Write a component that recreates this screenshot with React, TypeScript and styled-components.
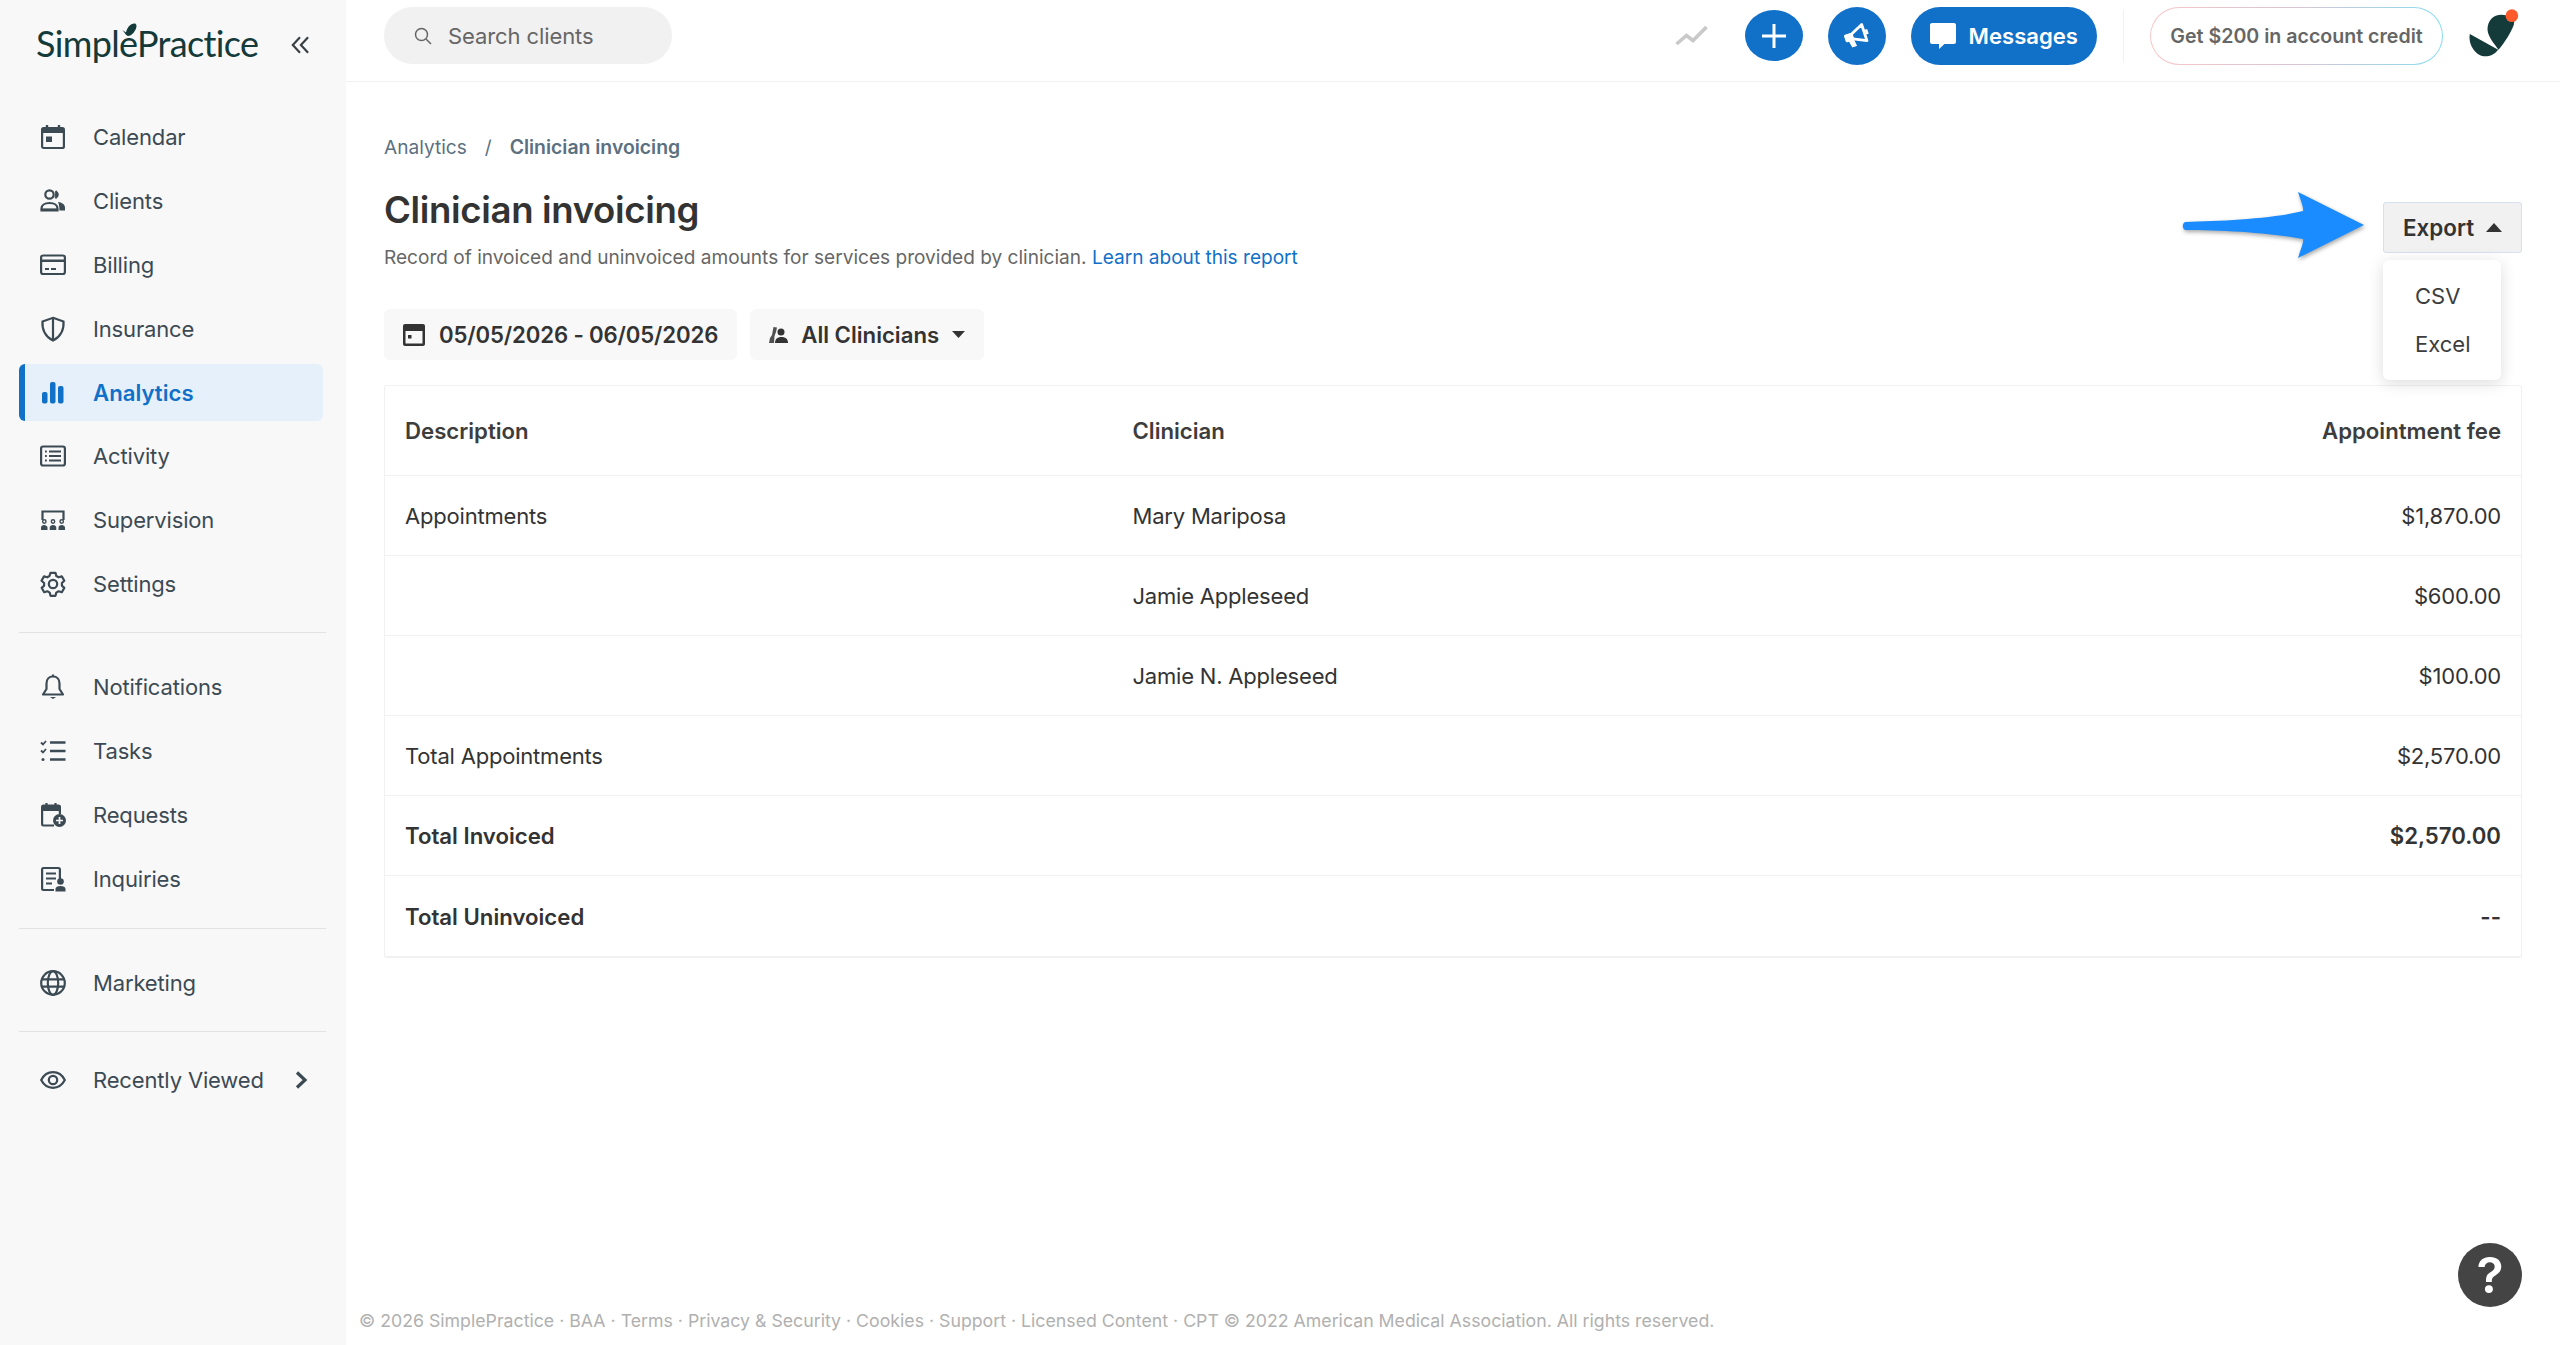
import styled, { createGlobalStyle } from "styled-components";
import type { ReactNode } from "react";

const GlobalStyle = createGlobalStyle`
  html, body {
    margin: 0;
    padding: 0;
    height: 100%;
    background: #fff;
  }
  body {
    font-family: Inter, "Liberation Sans", sans-serif;
    color: #333;
    -webkit-font-smoothing: antialiased;
  }
  #root {
    height: 100%;
  }
  * {
    box-sizing: border-box;
  }
`;

const Page = styled.div`
  display: flex;
  height: 1345px;
  overflow: hidden;
`;

// --- Sidebar ---

const Sidebar = styled.aside`
  flex: 0 0 346px;
  background: #f8f8f8;
  padding: 0 20px 0 19px;
`;

const LogoRow = styled.div`
  display: flex;
  align-items: center;
  justify-content: space-between;
  height: 86px;
  margin-bottom: 19px;
  padding: 0 17px 0 17px;
`;

const Logo = styled.div`
  position: relative;
  font-family: Lato, "Open Sans", sans-serif;
  font-size: 36px;
  font-weight: 400;
  letter-spacing: -0.65px;
  color: #143a3a;
  line-height: 46px;

  svg {
    position: absolute;
    left: 86px;
    top: 3px;
  }
`;

const CollapseButton = styled.span`
  display: flex;
  margin-top: 4px;
  color: #3a3f44;
`;

const NavGroup = styled.nav<{ $pad?: number }>`
  padding: 0 0 ${(p) => p.$pad ?? 16}px;
`;

const NavItem = styled.a<{ $active?: boolean }>`
  display: flex;
  align-items: center;
  height: ${(p) => (p.$active ? "56.9px" : "63.9px")};
  margin: ${(p) => (p.$active ? "3.5px 3px 3.5px 0" : "0")};
  padding-left: ${(p) => (p.$active ? "15px" : "21px")};
  border-left: ${(p) => (p.$active ? "6px solid #1170c8" : "0")};
  border-radius: 6px;
  background: ${(p) => (p.$active ? "#e6f0fa" : "transparent")};
  color: ${(p) => (p.$active ? "#1170c8" : "#3c4a54")};
  font-size: ${(p) => (p.$active ? "22.2px" : "22px")};
  letter-spacing: ${(p) => (p.$active ? "0" : "-0.15px")};
  font-weight: ${(p) => (p.$active ? 600 : 400)};

  svg.nav-icon {
    flex: 0 0 26px;
    margin-right: 27px;
  }
`;

const ChevronWrap = styled.span`
  display: flex;
  margin-left: 30px;
  color: #3c4a54;
`;

const Divider = styled.hr<{ $gap?: number }>`
  border: 0;
  border-top: 1.5px solid #e2e2e2;
  margin: 0 0 ${(p) => p.$gap ?? 22}px;
`;

// --- Top bar ---

const Main = styled.div`
  flex: 1;
  min-width: 0;
  display: flex;
  flex-direction: column;
  position: relative;
`;

const TopBar = styled.header`
  flex: 0 0 82px;
  display: flex;
  align-items: center;
  padding: 0 40px 10px 38px;
  border-bottom: 1.5px solid #f1f1f1;
`;

const SearchBox = styled.div`
  display: flex;
  align-items: center;
  gap: 16px;
  width: 288px;
  height: 57px;
  padding-left: 30px;
  border-radius: 29px;
  background: #f1f1f1;
  color: #666;
  font-size: 22px;
  letter-spacing: -0.1px;
`;

const TopActions = styled.div`
  margin-left: auto;
  display: flex;
  align-items: center;
`;

const RoundButton = styled.span<{ $flat?: boolean }>`
  display: flex;
  align-items: center;
  justify-content: center;
  width: 58px;
  height: ${(p) => (p.$flat ? "51px" : "58px")};
  margin-right: 25px;
  border-radius: 50%;
  background: #1170c8;
  color: #fff;
`;

const MessagesButton = styled.span`
  display: flex;
  align-items: center;
  gap: 13px;
  height: 58px;
  padding: 0 18.5px 0 19px;
  border-radius: 29px;
  background: #1170c8;
  color: #fff;
  font-size: 22.1px;
  font-weight: 600;
`;

const TopDivider = styled.span`
  width: 1.5px;
  height: 52px;
  margin: 0 26px;
  background: #f1f1f1;
`;

const CreditPill = styled.span`
  display: flex;
  align-items: center;
  justify-content: center;
  width: 293px;
  height: 58px;
  border: 1.5px solid transparent;
  border-radius: 29px;
  background:
    linear-gradient(#fff, #fff) padding-box,
    linear-gradient(90deg, #f9c6c6, #d9c6d4, #86dcf2) border-box;
  color: #666;
  font-size: 19.6px;
  font-weight: 600;
`;

const Avatar = styled.span`
  display: flex;
  margin: -5px 0 0 25px;
`;

const TrendWrap = styled.span`
  display: flex;
  margin-right: 37px;
`;

// --- Content ---

const Content = styled.main`
  flex: 1;
  padding: 54px 38px 0;
`;

const Breadcrumb = styled.div`
  display: flex;
  align-items: center;
  height: 22px;
  font-size: 19.1px;
  color: #5b7080;

  i {
    font-style: normal;
    margin: 0 18px;
  }

  b {
    font-size: 19.4px;
    font-weight: 600;
  }
`;

const HeadingRow = styled.div`
  position: relative;
  margin-top: 29px;
`;

const Title = styled.h1`
  margin: 0;
  font-size: 36.6px;
  font-weight: 600;
  line-height: 46px;
  letter-spacing: -0.35px;
  color: #333;
`;

const Description = styled.p`
  margin: 13px 0 0;
  font-size: 19.07px;
  line-height: 24px;
  color: #666;

  a {
    color: #1170c8;
  }
`;

const ExportArea = styled.div`
  position: absolute;
  right: 0;
  top: 15px;
  z-index: 2;
`;

const ExportButton = styled.span`
  display: flex;
  align-items: center;
  gap: 12px;
  width: 139px;
  height: 51px;
  padding-left: 20px;
  border-radius: 3px;
  outline: 1.5px solid rgba(130, 180, 230, 0.25);
  outline-offset: -1px;
  background: #f1f1f1;
  color: #333;
  font-size: 22.4px;
  font-weight: 600;
`;

const ExportMenu = styled.div`
  position: absolute;
  top: 58px;
  left: 0;
  width: 118px;
  height: 120px;
  padding: 12px 0 0 32px;
  border-radius: 6px;
  background: #fff;
  box-shadow: 0 3px 16px rgba(0, 0, 0, 0.14);
  font-size: 22px;
  color: #3d3d3d;

  div {
    height: 48px;
    line-height: 48px;
  }
`;

const ArrowMark = styled.svg`
  position: absolute;
  right: 156px;
  top: -13px;
  filter: drop-shadow(1px 2px 2px rgba(0, 0, 0, 0.35));
`;

const Filters = styled.div`
  display: flex;
  gap: 13px;
  margin-top: 39px;
`;

const FilterButton = styled.span<{ $wide?: boolean }>`
  display: flex;
  align-items: center;
  height: 51px;
  padding: 0 19px;
  gap: ${(p) => (p.$wide ? "14px" : "13px")};
  border-radius: 6px;
  background: #f8f8f8;
  color: #333;
  font-size: 22.2px;
  letter-spacing: ${(p) => (p.$wide ? "-0.15px" : "0")};
  font-weight: 600;
`;

const Table = styled.div`
  margin-top: 25px;
  border: 1.5px solid #f1f1f1;
  border-bottom-width: 2.5px;
  border-radius: 3px;
`;

const Row = styled.div<{ $head?: boolean; $bold?: boolean }>`
  display: grid;
  grid-template-columns: 727.5px 1fr auto;
  align-items: center;
  height: ${(p) => (p.$head ? "90px" : "80px")};
  padding: 0 20px;
  border-bottom: 1.5px solid #f1f1f1;
  font-size: ${(p) => (p.$head || p.$bold ? "22.2px" : "22px")};
  letter-spacing: ${(p) => (p.$head || p.$bold ? "0" : "-0.2px")};
  font-weight: ${(p) => (p.$head || p.$bold ? 600 : 400)};
  color: ${(p) => (p.$head ? "#3d3d3d" : "#333")};

  &:last-child {
    border-bottom: 0;
  }
`;

const Footer = styled.footer`
  padding: 0 0 0 13px;
  height: 36px;
  font-size: 17.73px;
  line-height: 24px;
  color: #b0b0b0;
`;

const HelpButton = styled.span`
  position: absolute;
  right: 38px;
  bottom: 38px;
  display: flex;
  align-items: center;
  justify-content: center;
  width: 64px;
  height: 64px;
  border-radius: 50%;
  background: #444;
  color: #fff;
  font-size: 50px;
  font-weight: 600;
`;

// --- Icons ---

const Icon = ({ children, size = 26 }: { children: ReactNode; size?: number }) => (
  <svg className="nav-icon" width={size} height={size} viewBox="0 0 26 26" fill="none" stroke="currentColor" strokeWidth="2.2">
    {children}
  </svg>
);

const CalendarIcon = () => (
  <Icon>
    <path d="M2 5.5c0-.8.7-1.5 1.5-1.5h19c.8 0 1.5.7 1.5 1.5V9H2z" fill="currentColor" stroke="none" />
    <rect x="2.1" y="4" width="21.8" height="20" rx="1.5" />
    <path d="M7 1v4M19 1v4" strokeWidth="2.4" />
    <rect x="6" y="12.5" width="6" height="5.5" fill="currentColor" stroke="none" />
  </Icon>
);

const ClientsIcon = () => (
  <Icon>
    <circle cx="9.5" cy="6.5" r="4.2" />
    <path d="M1.5 22.5v-2c0-3.2 3-5.5 8-5.500s8 2.300 8 5.500v2z" />
    <path d="M16 2.800a4.300 4.300 0 0 1 0 7.600c-1 0-.8-1.500-.5-3.600.2-2-.4-3.400.5-4z" fill="currentColor" stroke="currentColor" strokeWidth="1" />
    <path d="M18 14c4 .4 7 2.600 7 5.500v3h-5.600c0-3.400-.2-6-1.400-8.500z" fill="currentColor" stroke="none" />
    <path d="M1.500 21.500h16" />
  </Icon>
);

const CardIcon = () => (
  <Icon>
    <rect x="1.100" y="3.500" width="23.800" height="18.500" rx="2" />
    <path d="M1 7.500h24V10H1z" fill="currentColor" stroke="none" />
    <path d="M5 17h4M11 17h5" />
  </Icon>
);

const ShieldIcon = () => (
  <Icon>
    <path d="M13 1.800 23.500 5.500c.6 8-3 15.500-10.500 19C5.500 21 1.900 13.500 2.500 5.500z" />
    <path d="M13 2v22" />
  </Icon>
);

const BarsIcon = () => (
  <Icon>
    <g fill="currentColor" stroke="none">
      <rect x="2" y="12" width="5.500" height="11.500" rx="2" />
      <rect x="10" y="2" width="5.500" height="21.500" rx="2" />
      <rect x="18" y="6" width="5.500" height="17.500" rx="2" />
    </g>
  </Icon>
);

const ActivityIcon = () => (
  <Icon>
    <rect x="1.100" y="3.500" width="23.800" height="19" rx="2" />
    <path d="M9 8.500h12M9 13h12M9 17.500h12M5 8.500h1.800M5 13h1.800M5 17.500h1.800" />
  </Icon>
);

const SupervisionIcon = () => (
  <Icon>
    <path d="M2.500 13V4.500h21V13" />
    <g fill="currentColor" stroke="none">
      <path d="M1 23v-2.500c0-1.500 1.500-2.500 3-2.500s3.500 1 3.500 2.500V23zM9.700 23v-2.500c0-1.500 1.500-2.500 3.300-2.500s3.300 1 3.300 2.500V23zM18.500 23v-2.500c0-1.500 1.500-2.500 3.200-2.500S25 19 25 20.500V23z" />
    </g>
    <g strokeWidth="1.400">
      <circle cx="4.300" cy="14.500" r="1.700" />
      <circle cx="13" cy="14.500" r="1.700" />
      <circle cx="21.700" cy="14.500" r="1.700" />
    </g>
  </Icon>
);

const GearIcon = () => (
  <Icon>
    <circle cx="13" cy="13" r="4.200" />
    <path d="M10.500 1.800h5l.8 3.200 2.300 1.300 3.200-.9 2.500 4.300-2.400 2.300v2.600l2.400 2.300-2.500 4.300-3.200-.9-2.300 1.300-.8 3.200h-5l-.8-3.200-2.300-1.300-3.200.9-2.500-4.300 2.400-2.300v-2.600L1.500 9.700 4 5.400l3.200.9L9.500 5z" strokeLinejoin="round" />
  </Icon>
);

const BellIcon = () => (
  <Icon>
    <path d="M13 2.500c-4 0-6.500 3-6.500 7v5.500L3 20.500h20L19.500 15V9.500c0-4-2.500-7-6.500-7z" strokeLinejoin="round" />
    <path d="M13 .5v2" />
    <path d="M10 23h6l-3 2z" fill="currentColor" stroke="none" />
  </Icon>
);

const TasksIcon = () => (
  <Icon>
    <path d="M1 4.500l2 2 3-3.500M1 12.500l2 2 3-3.500" strokeWidth="1.800" />
    <path d="M10 4.500h15.500M10 13h15.500M10 21.500h15.500" strokeWidth="2.400" />
    <circle cx="3" cy="21.500" r="1.500" fill="currentColor" stroke="none" />
  </Icon>
);

const RequestsIcon = () => (
  <Icon>
    <path d="M14 23.500H3.500c-.8 0-1.400-.6-1.400-1.400V5c0-.8.6-1.400 1.400-1.400h15c.8 0 1.400.6 1.400 1.400v7" />
    <path d="M2 5c0-.8.7-1.500 1.500-1.500h15c.8 0 1.500.7 1.500 1.500v4H2z" fill="currentColor" stroke="none" />
    <path d="M6.500 1v4M15.500 1v4" />
    <circle cx="19.500" cy="18.500" r="6.500" fill="currentColor" stroke="none" />
    <path d="M19.500 15v7M16 18.500h7" stroke="#f8f8f8" strokeWidth="1.700" />
  </Icon>
);

const InquiriesIcon = () => (
  <Icon>
    <path d="M14 24H3.500c-.8 0-1.400-.6-1.400-1.400V3.400C2.100 2.600 2.700 2 3.500 2h15c.8 0 1.400.6 1.400 1.400V13" />
    <path d="M6 7.500h10M6 12.500h10M6 17.500h6" />
    <circle cx="20.500" cy="15.500" r="3.300" fill="currentColor" stroke="none" />
    <path d="M15.500 25.500v-2.700c0-1.700 2-2.800 5-2.800s5 1.100 5 2.800v2.700z" fill="currentColor" stroke="none" />
  </Icon>
);

const GlobeIcon = () => (
  <Icon>
    <circle cx="13" cy="13" r="11.800" />
    <ellipse cx="13" cy="13" rx="5.200" ry="11.800" />
    <path d="M1.500 9.300h23M1.500 16.700h23" />
  </Icon>
);

const EyeIcon = () => (
  <Icon>
    <path d="M1.200 13C3.800 8 8 5.200 13 5.200S22.200 8 24.800 13C22.200 18 18 20.800 13 20.800S3.800 18 1.200 13z" />
    <circle cx="13" cy="13" r="4.200" />
  </Icon>
);

const navTop = [
  { label: "Calendar", icon: <CalendarIcon /> },
  { label: "Clients", icon: <ClientsIcon /> },
  { label: "Billing", icon: <CardIcon /> },
  { label: "Insurance", icon: <ShieldIcon /> },
  { label: "Analytics", icon: <BarsIcon />, active: true },
  { label: "Activity", icon: <ActivityIcon /> },
  { label: "Supervision", icon: <SupervisionIcon /> },
  { label: "Settings", icon: <GearIcon /> },
];

const navMiddle = [
  { label: "Notifications", icon: <BellIcon /> },
  { label: "Tasks", icon: <TasksIcon /> },
  { label: "Requests", icon: <RequestsIcon /> },
  { label: "Inquiries", icon: <InquiriesIcon /> },
];

const rows = [
  { description: "Appointments", clinician: "Mary Mariposa", fee: "$1,870.00" },
  { description: "", clinician: "Jamie Appleseed", fee: "$600.00" },
  { description: "", clinician: "Jamie N. Appleseed", fee: "$100.00" },
  { description: "Total Appointments", clinician: "", fee: "$2,570.00" },
  { description: "Total Invoiced", clinician: "", fee: "$2,570.00", bold: true },
  { description: "Total Uninvoiced", clinician: "", fee: "--", bold: true },
];

export default function App() {
  return (
    <>
      <GlobalStyle />
      <Page>
        <Sidebar>
          <LogoRow>
            <Logo>
              SimplePractice
              <svg width="16" height="14" viewBox="0 0 16 14" fill="#143a3a">
                <path d="M6 13C4.500 13 2 9 .5 7L4 9.500C5 5 8 .5 12.500.5c2 0 2.500 2.500 1.500 5C12.500 9.500 9 13 6 13z" />
              </svg>
            </Logo>
            <CollapseButton>
              <svg width="18" height="18" viewBox="0 0 20 20" fill="none" stroke="currentColor" strokeWidth="2.400">
                <path d="M10 1.500 2 10l8 8.500M19 1.500 11 10l8 8.500" />
              </svg>
            </CollapseButton>
          </LogoRow>
          <NavGroup>
            {navTop.map((item) => (
              <NavItem key={item.label} $active={item.active}>
                {item.icon}
                {item.label}
              </NavItem>
            ))}
          </NavGroup>
          <Divider />
          <NavGroup $pad={17}>
            {navMiddle.map((item) => (
              <NavItem key={item.label}>
                {item.icon}
                {item.label}
              </NavItem>
            ))}
          </NavGroup>
          <Divider />
          <NavGroup $pad={16}>
            <NavItem>
              <GlobeIcon />
              Marketing
            </NavItem>
          </NavGroup>
          <Divider $gap={16} />
          <NavGroup>
            <NavItem>
              <EyeIcon />
              Recently Viewed
              <ChevronWrap>
                <svg width="14" height="20" viewBox="0 0 14 20" fill="none" stroke="currentColor" strokeWidth="3.200">
                  <path d="M3 2.500 11 10l-8 7.500" />
                </svg>
              </ChevronWrap>
            </NavItem>
          </NavGroup>
        </Sidebar>

        <Main>
          <TopBar>
            <SearchBox>
              <svg width="18" height="18" viewBox="0 0 18 18" fill="none" stroke="currentColor" strokeWidth="1.500">
                <circle cx="7.500" cy="7.500" r="6" />
                <path d="M12 12l5 5" />
              </svg>
              Search clients
            </SearchBox>
            <TopActions>
              <TrendWrap>
                <svg width="33" height="21" viewBox="0 0 33 21" fill="none" stroke="#c9c9c9" strokeWidth="3.600">
                  <path d="M1.500 19 11.500 10.500l6.500 5L31.500 2" />
                </svg>
              </TrendWrap>
              <RoundButton $flat>
                <svg width="24" height="24" viewBox="0 0 24 24" stroke="currentColor" strokeWidth="3">
                  <path d="M12 0v24M0 12h24" />
                </svg>
              </RoundButton>
              <RoundButton>
                <svg width="26" height="26" viewBox="0 0 26 26" fill="none" stroke="currentColor" strokeLinejoin="round">
                  <g transform="rotate(-18 13 13)">
                    <path d="M2 9.500h6.500L21 3.500v17L8.500 14.500H2z" strokeWidth="2.800" />
                    <path d="M2 9.500h6.500v5H2z" fill="currentColor" strokeWidth="2" />
                    <path d="M4 15h4.500l1 7H5.500z" fill="currentColor" strokeWidth="1" />
                    <path d="M23.500 9.500v5" strokeWidth="2.600" />
                  </g>
                </svg>
              </RoundButton>
              <MessagesButton>
                <svg width="26" height="26" viewBox="0 0 26 26" fill="currentColor">
                  <path d="M2 0h22c1.100 0 2 .9 2 2v17c0 1.100-.9 2-2 2H14.500L9 26v-5H2c-1.100 0-2-.9-2-2V2C0 .9.900 0 2 0z" />
                </svg>
                Messages
              </MessagesButton>
              <TopDivider />
              <CreditPill>Get $200 in account credit</CreditPill>
              <Avatar>
                <svg width="52" height="50" viewBox="85 25 155 150" fill="#143a3a">
                  <path d="M143 90C143 62 160 45 185 45L225 50 222 75C212 100 195 128 176 150 162 130 145 112 143 90z" />
                  <path d="M90 103 175 150C160 170 135 175 118 165 100 155 85 130 90 103z" />
                  <circle cx="216" cy="48" r="19" fill="#ff5a2c" />
                </svg>
              </Avatar>
            </TopActions>
          </TopBar>

          <Content>
            <Breadcrumb>
              Analytics<i>/</i>
              <b>Clinician invoicing</b>
            </Breadcrumb>
            <HeadingRow>
              <Title>Clinician invoicing</Title>
              <Description>
                Record of invoiced and uninvoiced amounts for services provided by clinician.{" "}
                <a>Learn about this report</a>
              </Description>
              <ExportArea>
                <ArrowMark width="184" height="72" viewBox="0 0 184 72">
                  <path
                    d="M3 33C40 32 90 30 121 22 122 20 119 12 116 3L182 36 116 69C119 60 122 52 121 50 90 44 40 41 3 41 0 39 0 35 3 33z"
                    fill="#1a8cff"
                  />
                </ArrowMark>
                <ExportButton>
                  Export
                  <svg width="16" height="9" viewBox="0 0 16 9" fill="#333">
                    <path d="M8 0l8 9H0z" />
                  </svg>
                </ExportButton>
                <ExportMenu>
                  <div>CSV</div>
                  <div>Excel</div>
                </ExportMenu>
              </ExportArea>
            </HeadingRow>
            <Filters>
              <FilterButton $wide>
                <svg width="22" height="24" viewBox="0 0 22 24" fill="#333">
                  <path d="M2 1h18c1.100 0 2 .9 2 2v18c0 1.100-.9 2-2 2H2c-1.100 0-2-.9-2-2V3c0-1.100.9-2 2-2zm.5 7v12.500h17V8zM5 12h3.500v3.500H5z" fillRule="evenodd" />
                </svg>
                05/05/2026 - 06/05/2026
              </FilterButton>
              <FilterButton>
                <svg width="19" height="18" viewBox="0 0 19 18" fill="#333">
                  <circle cx="12" cy="6" r="3.500" />
                  <path d="M6 17c0-4 2.500-6 6.500-6s6.500 2 6.500 6z" />
                  <path d="M4.500 1 8 1.500 7 6 5.500 10 5 17H0l1-5 2-3z" opacity="0.85" />
                </svg>
                All Clinicians
                <svg width="13" height="7" viewBox="0 0 13 7" fill="#333">
                  <path d="M0 0h13L6.500 7z" />
                </svg>
              </FilterButton>
            </Filters>
            <Table>
              <Row $head>
                <span>Description</span>
                <span>Clinician</span>
                <span>Appointment fee</span>
              </Row>
              {rows.map((row) => (
                <Row key={row.description + row.clinician} $bold={row.bold}>
                  <span>{row.description}</span>
                  <span>{row.clinician}</span>
                  <span>{row.fee}</span>
                </Row>
              ))}
            </Table>
          </Content>

          <Footer>
            © 2026 SimplePractice · BAA · Terms · Privacy &amp; Security · Cookies · Support · Licensed Content · CPT © 2022 American Medical Association. All rights reserved.
          </Footer>
          <HelpButton>?</HelpButton>
        </Main>
      </Page>
    </>
  );
}
